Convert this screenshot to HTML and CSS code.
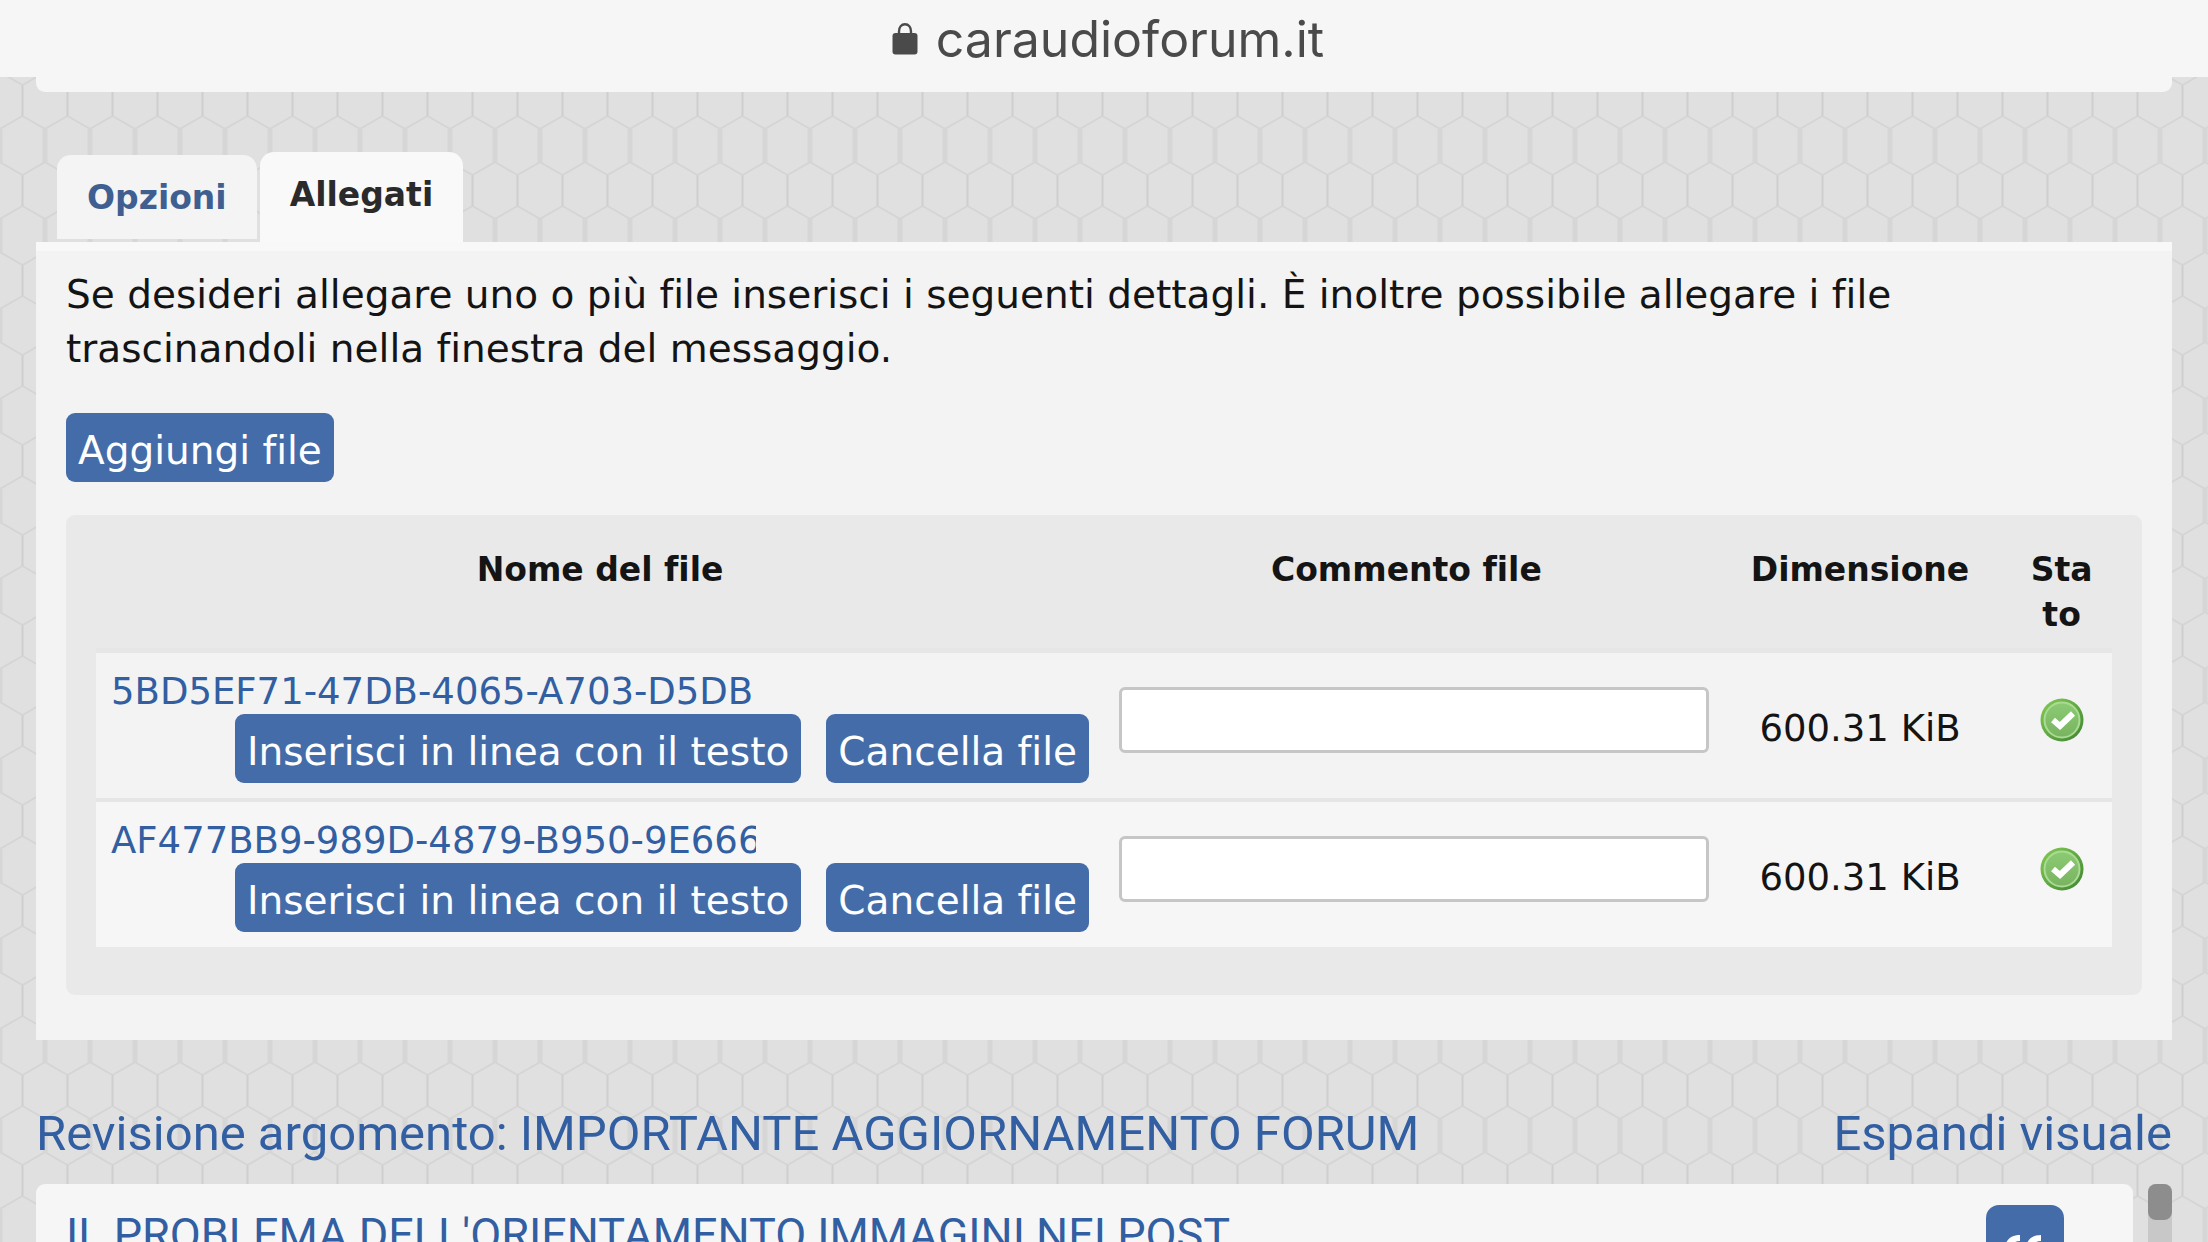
FILE: index.html
```html
<!DOCTYPE html>
<html lang="it">
<head>
    <meta charset="UTF-8">
    <meta name="viewport" content="width=device-width, initial-scale=1.0">
    <title>caraudioforum.it</title>
    <link rel="stylesheet" href="styles.css">
</head>
<body>
    <header class="address-bar">
        <svg class="lock" viewBox="0 0 26 32" aria-hidden="true">
            <path d="M7 15V8.500C7 4 9.500 1.200 13 1.200S19 4 19 8.500V15" fill="none" stroke="#4a4a4a" stroke-width="2.400"/>
            <rect x="0.500" y="10" width="25" height="21.500" rx="3" fill="#4a4a4a"/>
        </svg>
        <span>caraudioforum.it</span>
    </header>
    <main class="page">
        <div class="post-form"></div>

        <nav class="tabs">
            <a href="#options-panel" class="tab">Opzioni</a>
            <a href="#attach-panel" class="tab active">Allegati</a>
        </nav>

        <section class="panel" id="attach-panel">
            <p>Se desideri allegare uno o più file inserisci i seguenti dettagli. È inoltre possibile allegare i file trascinandoli nella finestra del messaggio.</p>
            <button type="button" class="button">Aggiungi file</button>

            <div class="file-list">
                <table>
                    <thead>
                        <tr>
                            <th class="col-name">Nome del file</th>
                            <th class="col-comment">Commento file</th>
                            <th class="col-size">Dimensione</th>
                            <th class="col-status">Stato</th>
                        </tr>
                    </thead>
                    <tbody>
                        <tr>
                            <td>
                                <a href="#" class="file-name">5BD5EF71-47DB-4065-A703-D5DB</a>
                                <div class="file-actions">
                                    <button type="button" class="button">Inserisci in linea con il testo</button>
                                    <button type="button" class="button">Cancella file</button>
                                </div>
                            </td>
                            <td class="comment"><input type="text" aria-label="Commento file 1"></td>
                            <td class="size">600.31 KiB</td>
                            <td class="status">
                                <svg class="ok" viewBox="0 0 44 44" role="img" aria-label="Caricato">
                                    <defs>
                                        <linearGradient id="ring" x1="0" y1="0" x2="1" y2="1">
                                            <stop offset="0" stop-color="#86cc55"/>
                                            <stop offset="1" stop-color="#3f8433"/>
                                        </linearGradient>
                                        <linearGradient id="fill" x1="0" y1="0" x2="0" y2="1">
                                            <stop offset="0" stop-color="#8bcb72"/>
                                            <stop offset="1" stop-color="#79b360"/>
                                        </linearGradient>
                                    </defs>
                                    <circle cx="22" cy="22" r="21.500" fill="url(#ring)"/>
                                    <circle cx="22" cy="22" r="17.500" fill="url(#fill)" stroke="#a9dc92" stroke-width="2"/>
                                    <path d="M13 22L20 28L33 15.500" fill="none" stroke="#fff" stroke-width="6"/>
                                </svg>
                            </td>
                        </tr>
                        <tr>
                            <td>
                                <a href="#" class="file-name">AF477BB9-989D-4879-B950-9E666</a>
                                <div class="file-actions">
                                    <button type="button" class="button">Inserisci in linea con il testo</button>
                                    <button type="button" class="button">Cancella file</button>
                                </div>
                            </td>
                            <td class="comment"><input type="text" aria-label="Commento file 2"></td>
                            <td class="size">600.31 KiB</td>
                            <td class="status">
                                <svg class="ok" viewBox="0 0 44 44" role="img" aria-label="Caricato">
                                    <circle cx="22" cy="22" r="21.500" fill="url(#ring)"/>
                                    <circle cx="22" cy="22" r="17.500" fill="url(#fill)" stroke="#a9dc92" stroke-width="2"/>
                                    <path d="M13 22L20 28L33 15.500" fill="none" stroke="#fff" stroke-width="6"/>
                                </svg>
                            </td>
                        </tr>
                    </tbody>
                </table>
            </div>
        </section>

        <div class="review-head">
            <h2>Revisione argomento: IMPORTANTE AGGIORNAMENTO FORUM</h2>
            <a href="#review">Espandi visuale</a>
        </div>
        <div class="review" id="review">
            <article class="post">
                <h3><a href="#">IL PROBLEMA DELL'ORIENTAMENTO IMMAGINI NEI POST</a></h3>
                <button type="button" class="quote" aria-label="Cita">
                    <svg viewBox="0 0 38 36" aria-hidden="true">
                        <path id="mark" d="M15 0V6C10 6 6.500 8.500 6.500 13H9C13 13 15.500 16 15.500 20V22C15.500 26 13 28 9 28H6C2 28 0 26 0 22V14C0 5 6 0 15 0Z" fill="#fff"/>
                        <use href="#mark" x="21"/>
                    </svg>
                </button>
            </article>
            <div class="scrollbar"><div class="thumb"></div></div>
        </div>
    </main>
</body>
</html>
```
FILE: styles.css
```css
* {
    box-sizing: border-box;
}
body {
    margin: 0;
    height: 100vh;
    overflow: hidden;
    display: flex;
    flex-direction: column;
    font-family: Verdana, "DejaVu Sans", sans-serif;
    font-variant-ligatures: none;
    color: #141414;
    background-color: #e0e0e0;
    /* honeycomb tile */
    background-image: url("data:image/svg+xml,%3Csvg xmlns='http://www.w3.org/2000/svg' width='45' height='90'%3E%3Cg fill='none' stroke='%23d5d5d5' stroke-width='2'%3E%3Cpath d='M22.500 31L0 44M22.500 31L45 44M0 77L22.500 90L45 77'/%3E%3Cpath d='M22.500 0V31' stroke='%23cfcfcf'/%3E%3Cpath d='M0 44V77M45 44V77' stroke='%23d6d6d6' stroke-width='5'/%3E%3C/g%3E%3C/svg%3E");
    background-position: 0 -5px;
}
a {
    color: #325ea2;
    text-decoration: none;
}
.address-bar {
    flex: none;
    display: flex;
    justify-content: center;
    align-items: center;
    gap: 18px;
    height: 77px;
    padding-left: 8px;
    background: #f6f6f7;
    color: #4a4a4a;
    font-family: Inter, Roboto, sans-serif;
    font-size: 50px;
}
.lock {
    width: 26px;
    height: 32px;
}
.page {
    flex: 1;
    min-height: 0;
    display: flex;
    flex-direction: column;
    padding: 0 36px;
}
.post-form {
    flex: none;
    height: 15px;
    background: #f6f6f6;
    border-radius: 0 0 9px 9px;
}
.tabs {
    flex: none;
    display: flex;
    align-items: flex-end;
    gap: 3px;
    height: 150px;
    padding: 0 21px;
    font-size: 33px;
    font-weight: bold;
}
.tab {
    height: 84px;
    margin-bottom: 3px;
    padding: 20px 30px;
    line-height: 45px;
    color: #3f5f91;
    background: #f4f4f4;
    border-radius: 14px 14px 0 0;
}
.tab.active {
    height: 90px;
    margin-bottom: 0;
    color: #2a2a2a;
    background: #f9f9f9;
}
.panel {
    flex: none;
    padding: 17px 30px 45px;
    background: #f3f3f3;
    border-top: 9px solid #f8f8f8;
}
.panel p {
    margin: 0 0 37px;
    font-size: 39px;
    line-height: 54px;
}
.button {
    display: block;
    height: 69px;
    padding: 6px 12px 0;
    border: 0;
    border-radius: 9px;
    background: #446ca9;
    color: #fff;
    font-family: inherit;
    font-variant-ligatures: none;
    font-size: 39px;
    white-space: nowrap;
}
.file-list {
    margin-top: 33px;
    padding: 15px 30px 48px;
    background: #e9e9e9;
    border-radius: 9px;
}
table {
    width: 100%;
    table-layout: fixed;
    border-collapse: separate;
    border-spacing: 0;
}
th {
    padding: 17px 15px 11px;
    font-size: 33px;
    line-height: 45px;
    vertical-align: top;
    word-break: break-all;
    border-bottom: 5px solid #e6e6e6;
}
.col-name {
    width: 50%;
}
.col-comment {
    width: 30%;
}
.col-size {
    width: 15%;
}
.col-status {
    width: 5%;
}
td {
    padding: 17px 15px 15px;
    font-size: 37px;
    vertical-align: top;
    background: #f3f3f3;
}
tr + tr td {
    background: #f6f6f6;
    border-top: 4px solid #e6e6e6;
}
.file-name {
    display: block;
    width: 66%;
    line-height: 44px;
    overflow: hidden;
    white-space: nowrap;
}
.file-actions {
    display: flex;
    justify-content: flex-end;
    gap: 25px;
}
td.comment {
    padding: 34px 0 0 15px;
}
.comment input {
    display: block;
    width: 100%;
    height: 66px;
    padding: 0 12px;
    border: 3px solid #c6c6c6;
    border-radius: 6px;
    background: #fff;
    font-family: inherit;
    font-size: 37px;
}
td.size {
    padding: 53px 0 0;
    line-height: 45px;
    text-align: center;
}
td.status {
    padding: 45px 0 0;
}
.ok {
    display: block;
    width: 44px;
    height: 44px;
    margin: 0 auto;
}
.review-head {
    flex: none;
    display: flex;
    justify-content: space-between;
    padding: 64px 0 20px;
    font-family: "Trebuchet MS", Roboto, sans-serif;
    font-size: 49px;
    line-height: 60px;
}
h2, h3 {
    margin: 0;
    font-size: inherit;
    font-weight: normal;
    color: #325ea2;
}
.review {
    flex: 1;
    min-height: 0;
    display: flex;
    gap: 15px;
    overflow: hidden;
}
.post {
    flex: 1;
    display: flex;
    justify-content: space-between;
    align-items: flex-start;
    padding: 21px 69px 0 30px;
    background: #f6f6f6;
    border-radius: 9px 9px 0 0;
    font-family: "Trebuchet MS", Roboto, sans-serif;
    font-size: 45px;
    line-height: 60px;
}
.quote {
    width: 78px;
    height: 75px;
    padding: 21px 19px 0;
    border: 0;
    border-radius: 13px;
    background: #446ca9;
}
.quote svg {
    display: block;
    width: 38px;
    height: 36px;
}
.scrollbar {
    width: 24px;
    background: #c8c8c8;
    border-radius: 8px 8px 0 0;
}
.thumb {
    height: 36px;
    background: #8d8d8d;
    border-radius: 8px;
}
```
